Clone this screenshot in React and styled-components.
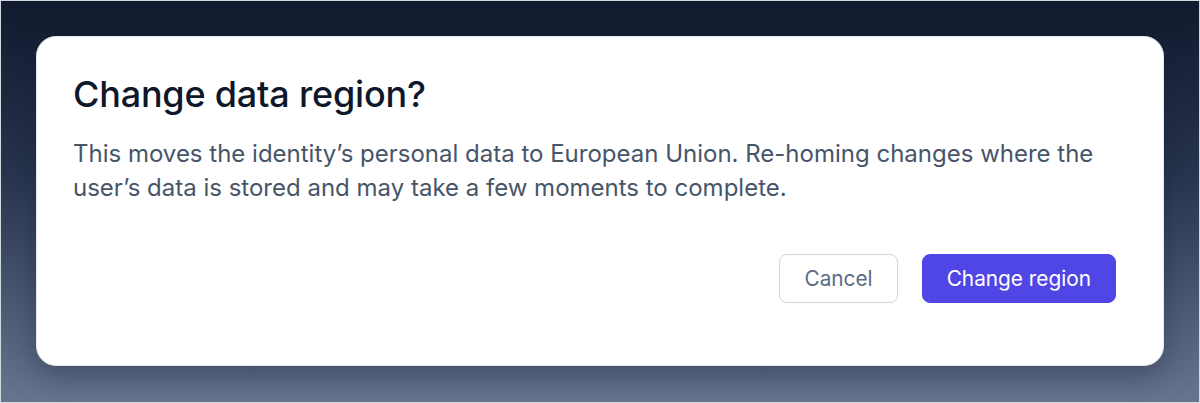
import React from 'react';
import styled, { createGlobalStyle } from 'styled-components';

const Global = createGlobalStyle`
  html, body { margin: 0; padding: 0; }
  body { font-family: Inter, "Noto Sans", sans-serif; }
`;

const Backdrop = styled.div`
  box-sizing: border-box;
  width: 1200px;
  height: 403px;
  border: 1px solid #d3d8e0;
  padding: 35px;
  background: linear-gradient(180deg, #111a2e 0%, #2a3650 45%, #67758f 100%);
`;

const Dialog = styled.div`
  box-sizing: border-box;
  height: 330px;
  background: #ffffff;
  border: 1px solid #e2e8f0;
  border-radius: 20px;
  box-shadow: 0 10px 30px rgba(15, 23, 42, 0.35);
  padding: 35px 47px 62px 36px;
  display: flex;
  flex-direction: column;
`;

const Title = styled.h2`
  margin: 0;
  font-size: 36px;
  line-height: 44px;
  font-weight: 500;
  color: #0f172a;
  letter-spacing: -0.2px;
`;

const Body = styled.p`
  margin: 21px 0 0;
  font-size: 24px;
  line-height: 34px;
  color: #475569;
`;

const Footer = styled.div`
  margin-top: auto;
  display: flex;
  justify-content: flex-end;
  gap: 24px;
`;

const Button = styled.button`
  box-sizing: border-box;
  height: 49px;
  padding: 0 24px;
  border-radius: 8px;
  font-family: inherit;
  font-size: 20.8px;
  font-weight: 400;
  cursor: pointer;
  border: 1px solid ${p => (p.$primary ? '#4f46e5' : '#cbd5e1')};
  background: ${p => (p.$primary ? '#4f46e5' : '#ffffff')};
  color: ${p => (p.$primary ? '#ffffff' : '#5b6b82')};
`;

export default function App() {
  return (
    <>
      <Global />
      <Backdrop>
        <Dialog role="dialog">
          <Title>Change data region?</Title>
          <Body>
            This moves the identity’s personal data to European Union. Re-homing changes where the
            user’s data is stored and may take a few moments to complete.
          </Body>
          <Footer>
            <Button>Cancel</Button>
            <Button $primary>Change region</Button>
          </Footer>
        </Dialog>
      </Backdrop>
    </>
  );
}
